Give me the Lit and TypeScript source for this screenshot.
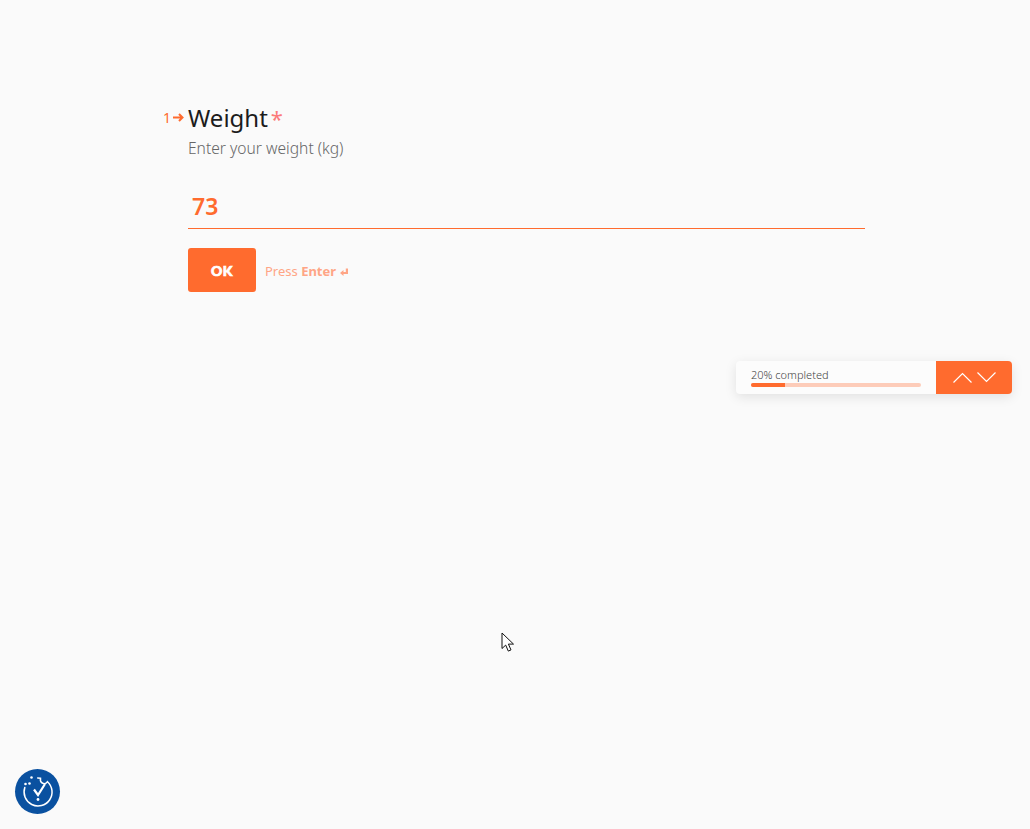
import { html, css, LitElement } from 'lit';
import { customElement } from 'lit/decorators.js';

@customElement('app-root')
export class AppRoot extends LitElement {
  render() {
    return html`
      <main class="form">
        <div class="question">
          <div class="number">
            <span>1</span>
            <svg width="11" height="9" viewBox="0 0 11 9" fill="none" stroke="currentColor" stroke-width="2">
              <path d="M0 4.500h9.500M6 1l3.500 3.500L6 8" />
            </svg>
          </div>
          <h1>Weight<span class="req">*</span></h1>
          <p class="hint">Enter your weight (kg)</p>
          <div class="answer">73</div>
          <div class="actions">
            <button class="ok">OK</button>
            <span class="press">Press <b>Enter</b>
              <svg width="8" height="8" viewBox="0 0 8 8" fill="currentColor">
                <path d="M5.800 0.500H8V6H3.500v2L0 5l3.500-3V4h2.300z" />
              </svg>
            </span>
          </div>
        </div>
      </main>

      <aside class="progress">
        <div class="status">
          <span class="label">20% completed</span>
          <div class="track"><div class="fill" style="width: 20%"></div></div>
        </div>
        <div class="nav">
          <svg width="19" height="11" viewBox="0 0 19 11" fill="none" stroke="#fff" stroke-width="1.200">
            <path d="M0.500 10.500L9.500 1.500l9 9" />
          </svg>
          <svg width="19" height="11" viewBox="0 0 19 11" fill="none" stroke="#fff" stroke-width="1.200">
            <path d="M0.500 0.500l9 9 9-9" />
          </svg>
        </div>
      </aside>

      <div class="cookie">
        <svg width="32" height="32" viewBox="0 0 32 32" fill="none" stroke="#fff" stroke-width="1.500" stroke-linecap="round">
          <path d="M2.800 11.500A14 14 0 1 0 25.500 5.700c-1.200 1.800-3.500 2.300-5.300 1.300-1.600-.9-2.100-2.700-1.700-4.700-1-.2-2-.3-2.800-.3" />
          <path d="M12 13.500l4 5.500 7-11" stroke-width="2.200" stroke-linecap="butt" />
          <circle cx="16" cy="23.500" r="1.400" fill="#fff" stroke="none" />
          <circle cx="9.500" cy="1.500" r="1.300" fill="#fff" stroke="none" />
          <circle cx="3.500" cy="8" r="1.300" fill="#fff" stroke="none" />
          <circle cx="7.500" cy="7.500" r="1.300" fill="#fff" stroke="none" />
        </svg>
      </div>

      <svg class="cursor" width="14" height="21" viewBox="0 0 14 21">
        <path d="M1 1v15.500l3.700-3.400 2.600 6 2.700-1.200-2.600-5.800H12.500z" fill="#fff" stroke="#111" stroke-width="1" />
      </svg>
    `;
  }

  static styles = css`
    :host {
      display: block;
      position: relative;
      height: 829px;
      background: #fafafa;
      overflow: hidden;
      font-family: 'Noto Sans', 'Open Sans', sans-serif;
    }
    .form {
      padding: 101px 165px 0 188px;
    }
    .question {
      position: relative;
    }
    .number {
      position: absolute;
      left: -25px;
      top: 8px;
      display: flex;
      align-items: center;
      gap: 2px;
      font-size: 14px;
      line-height: 17px;
      color: #ff6b2e;
    }
    h1 {
      margin: 0;
      height: 33px;
      font-size: 24px;
      line-height: 33px;
      font-weight: 400;
      color: #1c1c1c;
    }
    .req {
      margin-left: 3px;
      font-size: 22px;
      line-height: 0;
      color: #fb7a7a;
    }
    .hint {
      margin: 4px 0 0;
      font-size: 15.600px;
      line-height: 20px;
      font-weight: 300;
      color: #666;
    }
    .answer {
      margin-top: 31px;
      padding: 1px 0 5px 4px;
      border-bottom: 1px solid #ff6b2e;
      font-size: 23px;
      line-height: 33px;
      font-weight: 600;
      color: #ff6b2e;
    }
    .actions {
      display: flex;
      align-items: center;
      gap: 9px;
      margin-top: 19px;
    }
    .ok {
      width: 68px;
      height: 44px;
      padding: 2px 0 0;
      border: none;
      border-radius: 3px;
      background: #ff6b2e;
      color: #fff;
      font: 900 14px/1 Lato, sans-serif;
      letter-spacing: 0.500px;
      -webkit-text-stroke: 0.700px #fff;
    }
    .press {
      padding-top: 2px;
      font-size: 13px;
      color: #ffa585;
    }
    .press svg {
      margin-left: 1px;
    }
    .progress {
      position: absolute;
      left: 736px;
      top: 361px;
      width: 276px;
      height: 33px;
      display: flex;
      border-radius: 4px;
      background: #fcfcfc;
      box-shadow: 0 3px 12px rgba(0, 0, 0, 0.1);
      overflow: hidden;
    }
    .status {
      width: 200px;
      box-sizing: border-box;
      padding: 6px 15px 0;
    }
    .label {
      display: block;
      font-size: 11px;
      line-height: 15px;
      font-weight: 300;
      color: #444;
    }
    .track {
      height: 4px;
      margin-top: 1px;
      width: 170px;
      border-radius: 2px;
      background: #fdccb9;
      overflow: hidden;
    }
    .fill {
      height: 100%;
      background: #ff6b2e;
    }
    .nav {
      flex: 1;
      display: flex;
      align-items: center;
      justify-content: center;
      gap: 5px;
      background: #ff6b2e;
    }
    .cookie {
      position: absolute;
      left: 15px;
      top: 769px;
      width: 45px;
      height: 45px;
      display: flex;
      align-items: center;
      justify-content: center;
      border-radius: 50%;
      background: #0a51a0;
    }
    .cursor {
      position: absolute;
      left: 501px;
      top: 632px;
    }
  `;
}

declare global {
  interface HTMLElementTagNameMap {
    'app-root': AppRoot;
  }
}
